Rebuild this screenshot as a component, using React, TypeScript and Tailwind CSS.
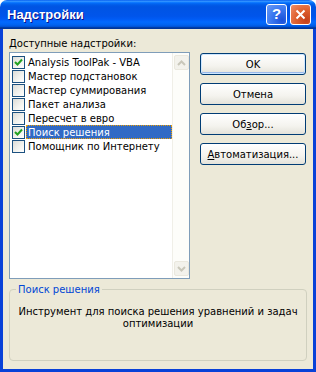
import React from 'react';

const items = [
  { label: 'Analysis ToolPak - VBA', checked: true },
  { label: 'Мастер подстановок', checked: false },
  { label: 'Мастер суммирования', checked: false },
  { label: 'Пакет анализа', checked: false },
  { label: 'Пересчет в евро', checked: false },
  { label: 'Поиск решения', checked: true, selected: true },
  { label: 'Помощник по Интернету', checked: false },
];

const CheckBox = ({ checked }: { checked: boolean }) => (
  <div className="w-[13px] h-[13px] shrink-0 border border-[#1C5180] bg-[linear-gradient(135deg,#DCDCD7_0%,#F4F4F0_60%,#FFFFFF_100%)] flex items-center justify-center">
    {checked && (
      <svg width="9" height="9" viewBox="0 0 9 9">
        <path d="M1 4 L3.5 6.5 L8 1.5" fill="none" stroke="#21A121" strokeWidth="2" />
      </svg>
    )}
  </div>
);

const Arrow = ({ up }: { up: boolean }) => (
  <div className="w-[15px] h-[15px] rounded-[2px] bg-[#F3F2EC] border border-[#EAE8DE] flex items-center justify-center">
    <svg width="9" height="6" viewBox="0 0 9 6">
      <path d={up ? 'M1 5 L4.5 1.5 L8 5' : 'M1 1 L4.5 4.5 L8 1'} fill="none" stroke="#C9C7BA" strokeWidth="2" />
    </svg>
  </div>
);

const XPButton = ({ children, primary }: { children: React.ReactNode; primary?: boolean }) => (
  <button
    className={`w-[106px] h-[22px] rounded-[3px] border border-[#003C74] bg-[linear-gradient(180deg,#FFFFFF_0%,#F4F3EE_60%,#E3E2DA_100%)] text-[10px] text-black flex items-center justify-center ${
      primary ? 'shadow-[inset_0_0_0_1px_#CEE7FF,inset_0_-1px_0_1px_#98B8EA]' : ''
    }`}
  >
    {children}
  </button>
);

export default function App() {
  return (
    <div
      className="w-[316px] h-[372px] flex flex-col text-black"
      style={{ fontFamily: '"DejaVu Sans", "Liberation Sans", sans-serif' }}
    >
      {/* title bar */}
      <div className="h-[29px] shrink-0 rounded-t-[7px] bg-[linear-gradient(180deg,#0058EE_0%,#3593FF_4%,#288EFF_6%,#127DFF_8%,#036FFC_10%,#0262EE_14%,#0057E5_20%,#0054E3_24%,#0055EB_56%,#005BF5_66%,#026AFE_76%,#0062EF_86%,#0052D6_92%,#0040AB_94%,#003092_100%)] flex items-center pl-[7px] pr-[5px]">
        <span
          className="flex-1 text-white font-bold text-[13px] [text-shadow:1px_1px_#0F1089]"
          style={{ fontFamily: '"Liberation Sans", sans-serif' }}
        >
          Надстройки
        </span>
        <div className="flex gap-[3px]">
          <div className="w-[21px] h-[21px] rounded-[3px] border border-white bg-[radial-gradient(circle_at_80%_80%,#1A50D8_0%,#3A78F0_50%,#6B9BF5_100%)] flex items-center justify-center text-white font-bold text-[15px]" style={{ fontFamily: '"Liberation Sans", sans-serif' }}>
            ?
          </div>
          <div className="w-[21px] h-[21px] rounded-[3px] border border-white bg-[radial-gradient(circle_at_80%_80%,#C4401A_0%,#E0612F_50%,#F0906A_100%)] flex items-center justify-center">
            <svg width="11" height="11" viewBox="0 0 11 11">
              <path d="M1.5 1.5 L9.5 9.5 M9.5 1.5 L1.5 9.5" stroke="white" strokeWidth="2" />
            </svg>
          </div>
        </div>
      </div>

      {/* client */}
      <div className="flex-1 bg-[#ECE9D8] border-l-[3px] border-r-[3px] border-b-[3px] border-[#0841D8] flex flex-col px-[6px] pt-[8px]">
        <div className="flex gap-[10px]">
          <div className="w-[181px] flex flex-col">
            <div className="h-[15px] text-[10px] leading-[13px]">
              <span className="underline">Д</span>оступные надстройки:
            </div>
            <div className="h-[227px] border border-[#7F9DB9] bg-white flex">
              <div className="flex-1 flex flex-col pt-[2px] pl-[2px]">
                {items.map((it) => (
                  <div key={it.label} className="h-[14px] flex items-center gap-[1px]">
                    <CheckBox checked={it.checked} />
                    <div
                      className={`h-[14px] flex-1 flex items-center pl-[2px] text-[10px] whitespace-nowrap ${
                        it.selected ? 'bg-[#316AC5] text-white outline-1 outline-dotted outline-[#F0A000] -outline-offset-1' : ''
                      }`}
                    >
                      {it.label}
                    </div>
                  </div>
                ))}
              </div>
              <div className="w-[17px] bg-[#FDFDFA] border-l border-[#F0EFE8] flex flex-col justify-between items-center py-[2px]">
                <Arrow up />
                <Arrow up={false} />
              </div>
            </div>
          </div>
          <div className="flex flex-col gap-[8px] pt-[16px]">
            <XPButton primary>OK</XPButton>
            <XPButton>Отмена</XPButton>
            <XPButton>
              Об<span className="underline">з</span>ор...
            </XPButton>
            <XPButton>
              <span className="underline">А</span>втоматизация...
            </XPButton>
          </div>
        </div>

        <fieldset className="mt-[4px] w-[298px] h-[78px] border border-[#D0D0BF] rounded-[4px] px-[4px]">
          <legend className="ml-[2px] px-[2px] text-[10px] leading-[13px] text-[#0046D5]">Поиск решения</legend>
          <div className="mt-[10px] text-[10px] leading-[12px] text-center whitespace-nowrap">
            Инструмент для поиска решения уравнений и задач
            <br />
            оптимизации
          </div>
        </fieldset>
      </div>
    </div>
  );
}
